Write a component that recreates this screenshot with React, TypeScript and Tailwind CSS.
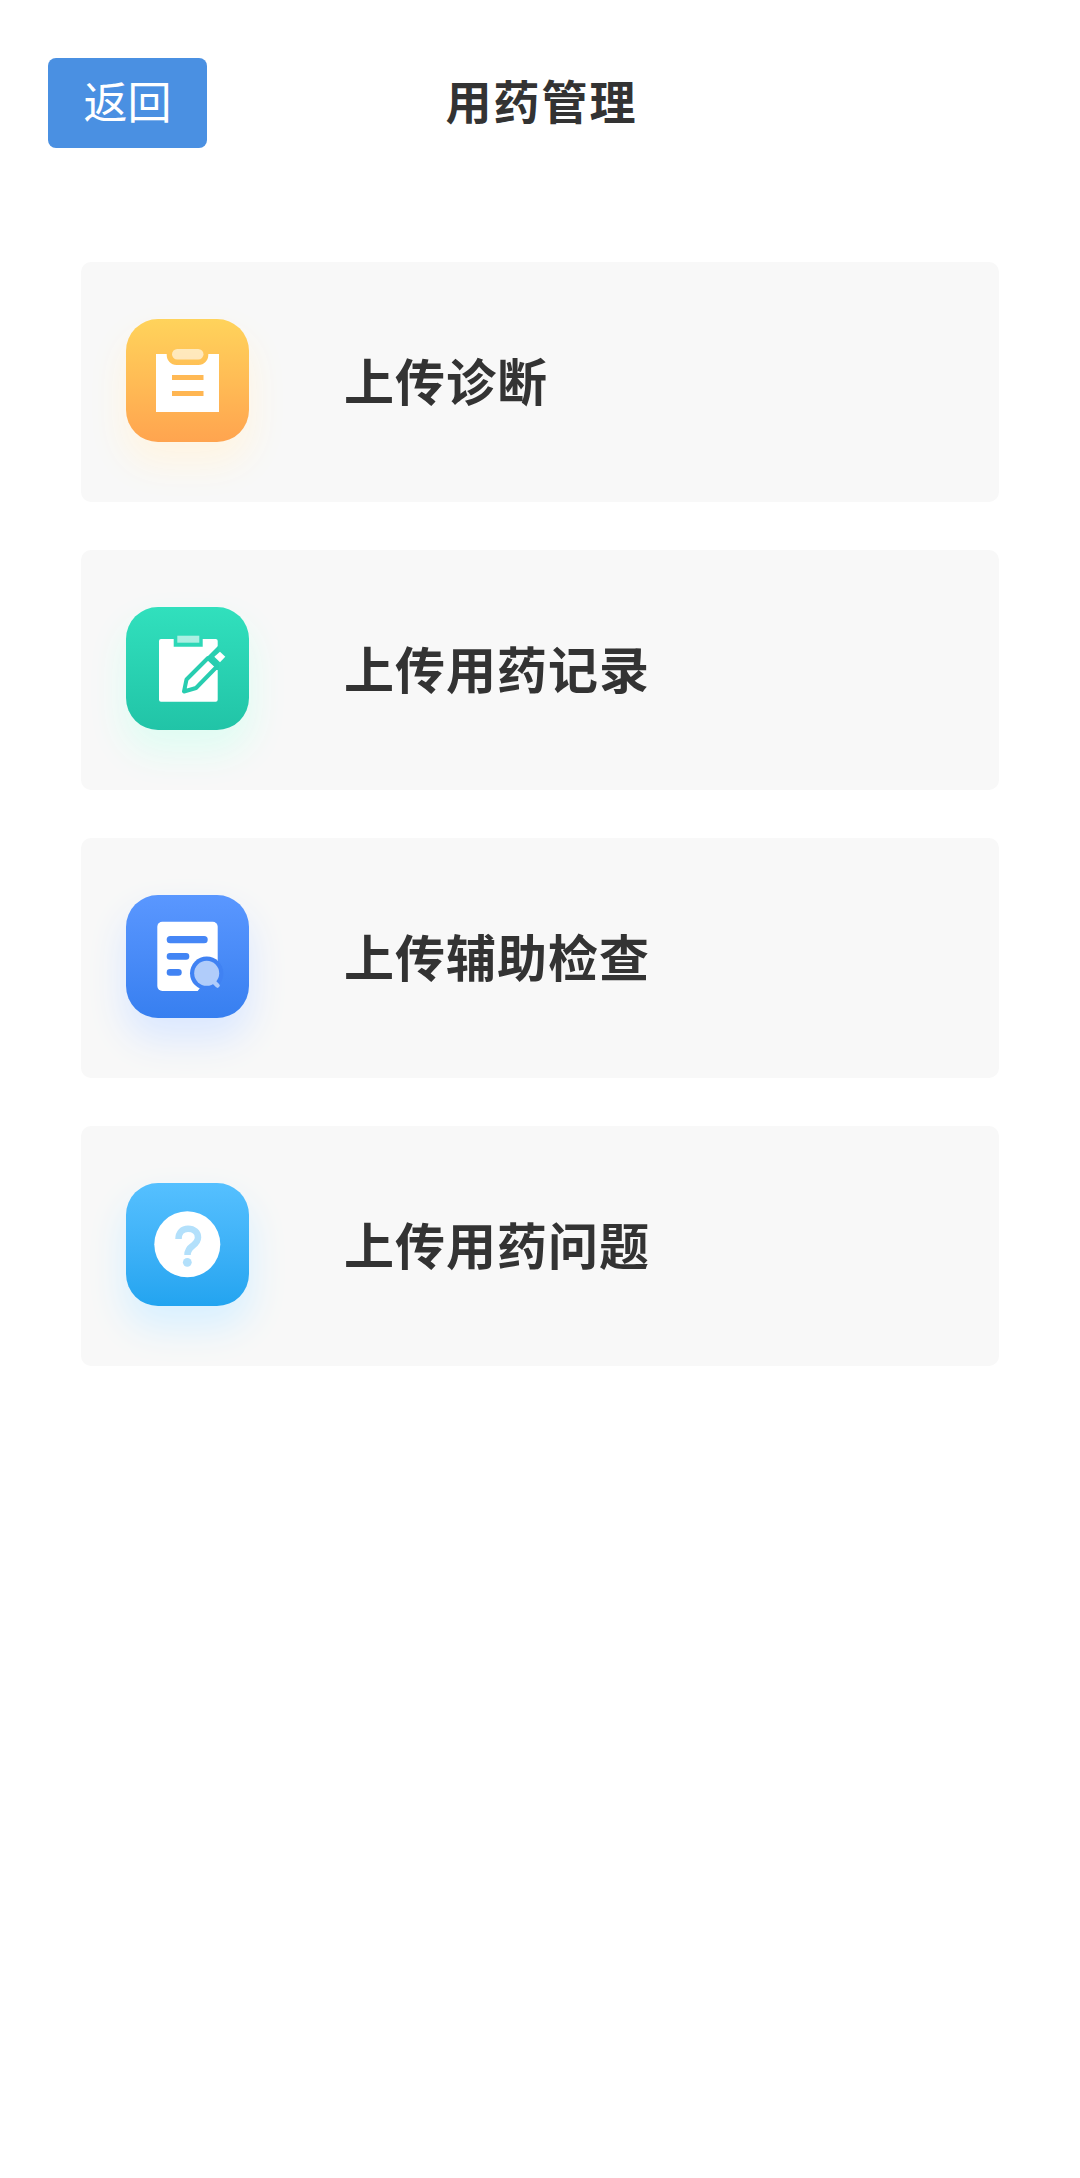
import React from 'react';

const ClipboardIcon = () => (
  <svg viewBox="0 0 123 123" className="w-full h-full">
    <path d="M30 35H40.7V36C40.7 41.5 45 46 50.5 46H72.5C78 46 82.3 41.5 82.3 36V35H93V93H30Z" fill="#fff" />
    <rect x="46" y="30" width="31.5" height="10.5" rx="5.25" fill="#fff" fillOpacity="0.6" />
    <rect x="46" y="56" width="31.5" height="5" fill="#ffb955" />
    <rect x="46" y="72" width="31.5" height="5" fill="#ffb652" />
  </svg>
);

const EditIcon = () => (
  <svg viewBox="0 0 123 123" className="w-full h-full">
    <path d="M35 32H47.7V39.7H76.7V32H89.7A2 2 0 0 1 91.7 34V92.7A2 2 0 0 1 89.7 94.7H35A2 2 0 0 1 33 92.7V34A2 2 0 0 1 35 32Z" fill="#fff" />
    <rect x="51.3" y="28.7" width="22" height="7" fill="#fff" fillOpacity="0.6" />
    <path d="M92.5 38.5V63H70V61Z" fill="#28cfb1" />
    <path d="M58 84.5L60.5 72.5L82 51L91 59.5L70 81Z" fill="#fff" stroke="#28cdb0" strokeWidth="4" strokeLinejoin="round" />
    <path d="M94 44.7L99.3 49.7L94 55.3L88.3 49.7Z" fill="#fff" />
  </svg>
);

const SearchDocIcon = () => (
  <svg viewBox="0 0 123 123" className="w-full h-full">
    <path d="M36.3 26.7H86.7A5 5 0 0 1 91.7 31.7V70L71.7 96H36.3A5 5 0 0 1 31.3 91V31.7A5 5 0 0 1 36.3 26.7Z" fill="#fff" />
    <rect x="40.7" y="41" width="41" height="7.3" rx="3.6" fill="#4586f6" />
    <rect x="40.7" y="58" width="22.6" height="6.7" rx="3.3" fill="#4285f4" />
    <rect x="40.7" y="74" width="15" height="6.7" rx="3.3" fill="#4183f3" />
    <circle cx="80.7" cy="78.3" r="16.7" fill="#4082f3" />
    <path d="M87 86L91.5 90.5" stroke="#b0ccfa" strokeWidth="4.5" strokeLinecap="round" />
    <circle cx="80.7" cy="78.3" r="12.5" fill="#b0ccfa" />
  </svg>
);

const QuestionIcon = () => (
  <svg viewBox="0 0 123 123" className="w-full h-full">
    <circle cx="61.3" cy="61.3" r="33" fill="#fff" />
    <path d="M52.5 56C52.5 49.5 56.5 45.7 62 45.7C68 45.7 72 49.5 72 54.5C72 58.5 69.5 60.7 66.5 63C63 65.5 61.5 67.5 61.5 72" fill="none" stroke="#b3e0fb" strokeWidth="6.5" />
    <circle cx="61.3" cy="79.3" r="4.4" fill="#b3e0fb" />
  </svg>
);

const items = [
  {
    label: '上传诊断',
    tile: 'bg-gradient-to-b from-[#ffd35b] to-[#ffa44f] shadow-[0_20px_36px_2px_#fff5e2]',
    icon: <ClipboardIcon />,
  },
  {
    label: '上传用药记录',
    tile: 'bg-gradient-to-b from-[#31e0bd] to-[#21c4a7] shadow-[0_20px_36px_2px_#dffdf3]',
    icon: <EditIcon />,
  },
  {
    label: '上传辅助检查',
    tile: 'bg-gradient-to-b from-[#5a97ff] to-[#377ff0] shadow-[0_20px_36px_2px_#dbe8ff]',
    icon: <SearchDocIcon />,
  },
  {
    label: '上传用药问题',
    tile: 'bg-gradient-to-b from-[#55c0ff] to-[#22a4f0] shadow-[0_20px_36px_2px_#d8f0ff]',
    icon: <QuestionIcon />,
  },
];

const App: React.FC = () => {
  return (
    <div className="w-[1080px] h-[2178px] bg-white font-['Noto_Sans_CJK_SC',sans-serif] text-[#333333]">
      <header className="grid grid-cols-[1fr_auto_1fr] items-center pt-[58px] pl-[48px] pr-[48px]">
        <button className="justify-self-start w-[159px] h-[90px] rounded-[8px] bg-[#4a90e2] text-white text-[44px] font-normal leading-none pb-[6px]">
          返回
        </button>
        <h1 className="text-[46px] font-bold leading-none tracking-[2px] mb-[8px] ml-[3px]">用药管理</h1>
        <div />
      </header>

      <main className="mt-[114px] ml-[81px] w-[918px] flex flex-col gap-[48px]">
        {items.map((item) => (
          <div
            key={item.label}
            className="h-[240px] rounded-[10px] bg-[#f8f8f8] flex items-center pl-[45px] pb-[3px]"
          >
            <div className={`w-[123px] h-[123px] rounded-[32px] shrink-0 ${item.tile}`}>
              {item.icon}
            </div>
            <span className="ml-[95px] mb-[4px] text-[50px] font-bold leading-none tracking-[1px]">{item.label}</span>
          </div>
        ))}
      </main>
    </div>
  );
};

export default App;
